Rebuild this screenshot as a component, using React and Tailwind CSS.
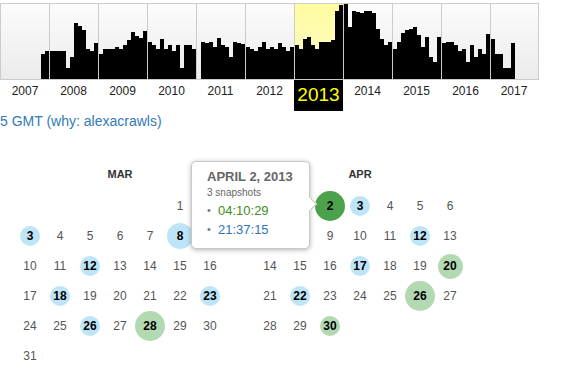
import React from "react";

// monthly capture heights per year (px)
const years = [
  { year: 2007, w: "w-[48px]", bars: [0, 0, 0, 0, 0, 0, 0, 0, 0, 0, 25, 28] },
  { year: 2008, w: "w-[49px]", bars: [28, 28, 28, 28, 11, 22, 56, 53, 49, 30, 28, 36] },
  { year: 2009, w: "w-[49px]", bars: [25, 30, 30, 30, 32, 30, 34, 39, 47, 43, 41, 48] },
  { year: 2010, w: "w-[49px]", bars: [37, 34, 30, 40, 30, 34, 28, 34, 11, 34, 34, 30] },
  { year: 2011, w: "w-[49px]", bars: [0, 37, 36, 37, 32, 41, 34, 32, 22, 37, 36, 35] },
  { year: 2012, w: "w-[49px]", bars: [32, 30, 28, 32, 37, 30, 32, 30, 36, 32, 28, 32] },
  { year: 2013, w: "w-[49px]", bars: [34, 30, 40, 42, 34, 30, 37, 37, 37, 39, 68, 74], active: true },
  { year: 2014, w: "w-[49px]", bars: [75, 52, 68, 67, 66, 68, 68, 66, 50, 40, 34, 37] },
  { year: 2015, w: "w-[49px]", bars: [30, 37, 46, 49, 50, 52, 44, 32, 42, 22, 17, 42] },
  { year: 2016, w: "w-[49px]", bars: [36, 37, 37, 34, 28, 30, 17, 34, 22, 30, 25, 45] },
  { year: 2017, w: "w-[48px]", bars: [40, 25, 25, 11, 11, 36, 0, 0, 0, 0, 0, 0] },
];

const BLUE = "bg-[#bee5f7]";
const GREEN = "bg-[#b3d9b2]";

const months = [
  {
    name: "MAR",
    start: 5,
    days: 31,
    marks: {
      3: [BLUE, "w-[20px] h-[20px]"],
      8: [BLUE, "w-[26px] h-[26px]"],
      12: [BLUE, "w-[20px] h-[20px]"],
      18: [BLUE, "w-[20px] h-[20px]"],
      23: [BLUE, "w-[20px] h-[20px]"],
      26: [BLUE, "w-[20px] h-[20px]"],
      28: [GREEN, "w-[30px] h-[30px]"],
    },
  },
  {
    name: "APR",
    start: 1,
    days: 30,
    marks: {
      2: ["bg-[#4ca24b]", "w-[30px] h-[30px]"],
      3: [BLUE, "w-[20px] h-[20px]"],
      12: [BLUE, "w-[20px] h-[20px]"],
      17: [BLUE, "w-[20px] h-[20px]"],
      20: [GREEN, "w-[25px] h-[25px]"],
      22: [BLUE, "w-[20px] h-[20px]"],
      26: [GREEN, "w-[30px] h-[30px]"],
      30: [GREEN, "w-[20px] h-[20px]"],
    },
  },
];

function Month({ month }) {
  const cells = [];
  for (let i = 0; i < month.start; i++) cells.push(null);
  for (let d = 1; d <= month.days; d++) cells.push(d);

  return (
    <div className="w-[210px]">
      <div className="h-[26px] flex items-center justify-center text-[11px] font-bold text-[#333]">
        {month.name}
      </div>
      <div className="mt-[4px] grid grid-cols-7">
        {cells.map((d, i) => {
          const mark = d ? month.marks[d] : null;
          return (
            <div key={i} className="h-[30px] flex items-center justify-center text-[12px]">
              {mark ? (
                <span className={`${mark[0]} ${mark[1]} rounded-full flex items-center justify-center font-bold text-black`}>
                  {d}
                </span>
              ) : (
                <span className="text-[#555]">{d}</span>
              )}
            </div>
          );
        })}
      </div>
    </div>
  );
}

export default function App() {
  return (
    <div className="w-[576px] h-[374px] overflow-hidden bg-white font-['Liberation_Sans',Arial,sans-serif]">
      {/* Sparkline */}
      <div className="pt-[3px]">
        <div className="w-[539px] h-[77px] flex border border-[#ccc] bg-linear-to-b from-[#fcfcfc] to-[#ebebeb]">
          {years.map((y, idx) => (
            <div
              key={y.year}
              className={`${y.w} h-full flex items-end ${idx > 0 ? "border-l border-[#ccc]" : ""} ${y.active ? "bg-linear-to-b from-[#fffca0] to-[#fffcc8]" : ""}`}
            >
              {y.bars.map((h, m) => (
                <div key={m} className="w-[4px] bg-black shrink-0" style={{ height: h }} />
              ))}
            </div>
          ))}
        </div>

        <div className="flex pl-[1px] h-[31px]">
          {years.map((y) =>
            y.active ? (
              <div key={y.year} className={`${y.w} bg-black text-[#ffff00] text-[19px] flex items-center justify-center`}>
                {y.year}
              </div>
            ) : (
              <div key={y.year} className={`${y.w} text-[12px] text-[#222] text-center pt-[3px] leading-[16px]`}>
                {y.year}
              </div>
            )
          )}
        </div>
      </div>

      <div className="h-[20px] leading-[20px] text-[14px] text-[#337ab7] whitespace-nowrap">
        5 GMT (why: alexacrawls)
      </div>

      {/* Calendar */}
      <div className="relative mt-[30px] pl-[15px] flex gap-[30px]">
        {months.map((m) => (
          <Month key={m.name} month={m} />
        ))}

        <div className="absolute left-[191px] top-0 w-[119px] h-[88px] bg-white border border-[#c8c8c8] rounded-[5px] shadow-[0_1px_5px_rgba(0,0,0,0.3)] pl-[15px] pt-[7px]">
          <div className="absolute right-[-6px] top-[37px] w-[10px] h-[10px] bg-white border-t border-r border-[#c8c8c8] rotate-45" />
          <div className="text-[13px] font-bold text-[#666] leading-[16px]">APRIL 2, 2013</div>
          <div className="text-[10px] text-[#666] leading-[14px] mt-[1px]">3 snapshots</div>
          <div className="flex items-center text-[13px] leading-[19px] mt-[1px]">
            <span className="text-[#777] text-[11px] leading-none w-[11px] shrink-0">•</span>
            <span className="text-[#3f8c24]">04:10:29</span>
          </div>
          <div className="flex items-center text-[13px] leading-[19px]">
            <span className="text-[#777] text-[11px] leading-none w-[11px] shrink-0">•</span>
            <span className="text-[#2f75b5]">21:37:15</span>
          </div>
        </div>
      </div>
    </div>
  );
}
